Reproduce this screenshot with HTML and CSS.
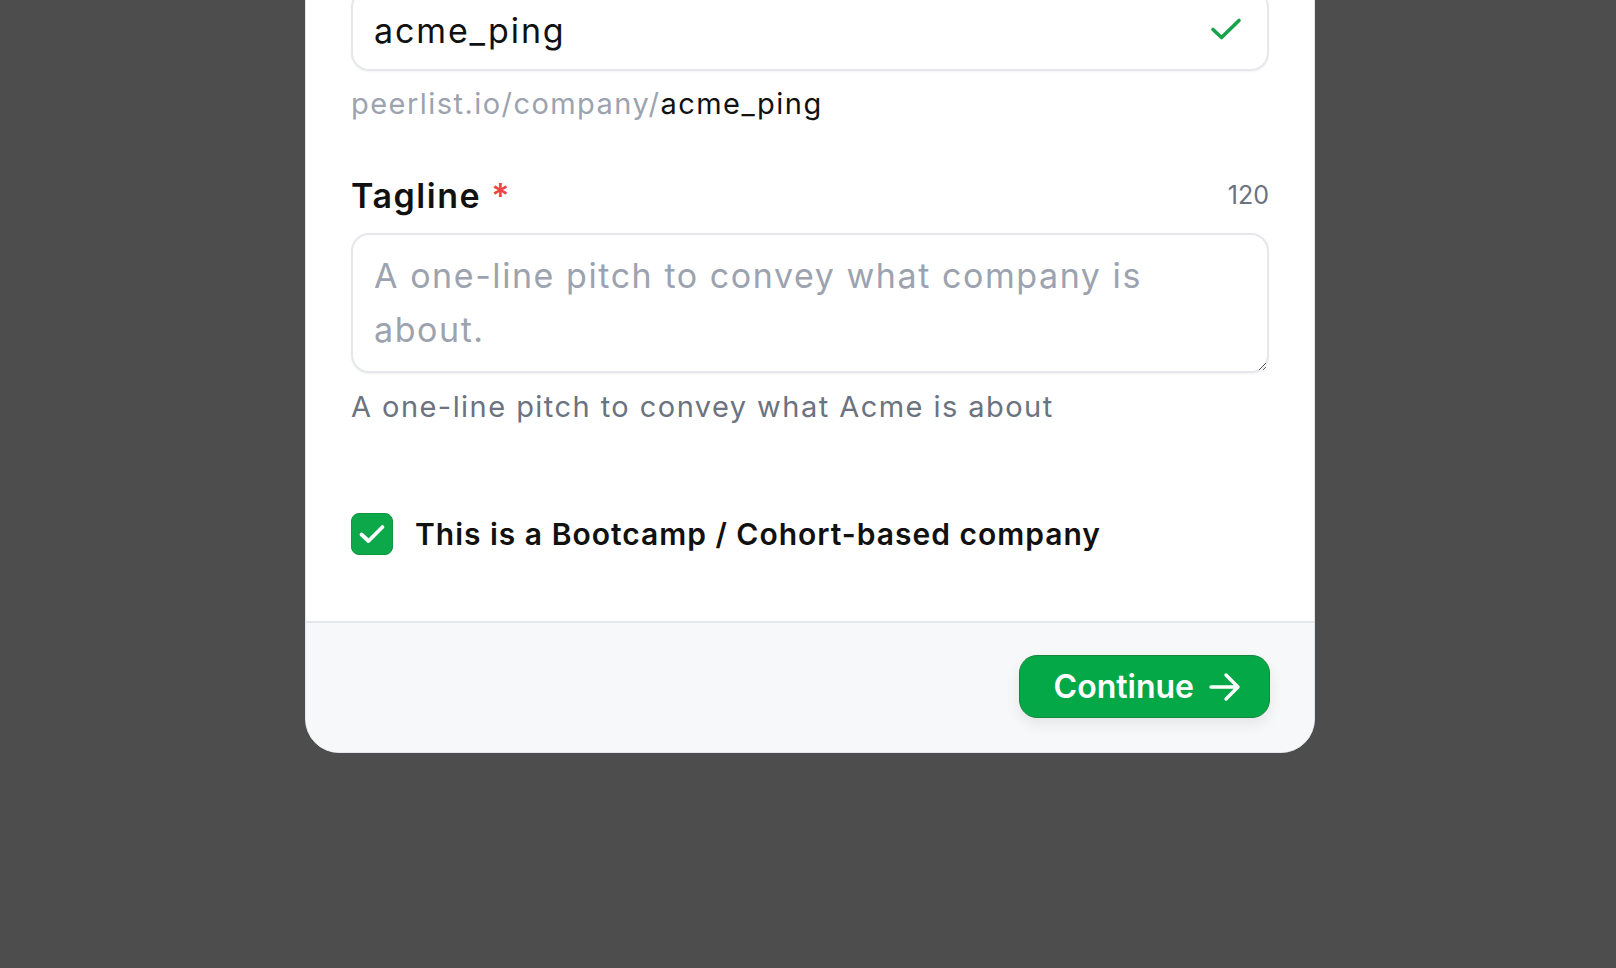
FILE: index.html
```html
<!DOCTYPE html>
<html lang="en">
<head>
<meta charset="utf-8">
<title>Create company</title>
<link rel="stylesheet" href="styles.css">
</head>
<body>
<div class="page">
  <div class="card">
    <div class="card-body">
      <div class="field">
        <div class="input-box">
          <span class="input-value">acme_ping</span>
          <svg class="valid-icon" width="32" height="24" viewBox="0 0 32 24" fill="none"><path d="M3 12.5l8.5 8L29 3.5" stroke="#16a34a" stroke-width="3.6" stroke-linecap="round" stroke-linejoin="round"/></svg>
        </div>
        <p class="url-hint"><span class="url-base">peerlist.io/company/</span><span class="url-slug">acme_ping</span></p>
      </div>

      <div class="field field-tagline">
        <div class="label-row">
          <label class="label" for="tagline">Tagline <span class="req">*</span></label>
          <span class="counter">120</span>
        </div>
        <textarea id="tagline" class="textarea" placeholder="A one-line pitch to convey what company is about."></textarea>
        <p class="hint">A one-line pitch to convey what Acme is about</p>
      </div>

      <div class="check-row">
        <span class="checkbox">
          <svg width="28" height="22" viewBox="0 0 28 22" fill="none"><path d="M3.5 11.5l7 6.5L24.5 4" stroke="#fff" stroke-width="3.8" stroke-linecap="round" stroke-linejoin="round"/></svg>
        </span>
        <span class="check-label">This is a Bootcamp / Cohort-based company</span>
      </div>
    </div>
    <div class="card-footer">
      <button class="btn-continue">Continue
        <svg width="34" height="30" viewBox="0 0 34 30" fill="none"><path d="M3 15h27M18 3l12 12-12 12" stroke="#fff" stroke-width="3.4" stroke-linecap="round" stroke-linejoin="round"/></svg>
      </button>
    </div>
  </div>
</div>
</body>
</html>
```

FILE: styles.css
```css
* { box-sizing: border-box; }
html, body {
  margin: 0;
  padding: 0;
  background: #4d4d4d;
  height: 100%;
  overflow: hidden;
}
body {
  font-family: Inter, "Noto Sans", sans-serif;
  color: #111;
}
.page {
  display: flex;
  justify-content: center;
}
.card {
  width: 1010px;
  margin-top: -60px;
  margin-left: 4px;
  background: #fff;
  border: 1px solid #e3e5ea;
  border-radius: 34px;
  overflow: hidden;
}
.card-body {
  padding: 48px 45px 66px 45px;
}
.input-box {
  height: 82px;
  border: 2px solid #e5e7eb;
  border-radius: 18px;
  display: flex;
  align-items: center;
  justify-content: space-between;
  padding: 0 25px 0 21px;
  box-shadow: 0 1px 2px rgba(0,0,0,0.05);
}
.input-value {
  font-size: 34px;
  letter-spacing: 0.055em;
  color: #111;
}
.valid-icon { margin-top: -2px; }
.url-hint {
  margin: 13px 0 0;
  font-size: 29px;
  line-height: 40px;
  letter-spacing: 0.05em;
}
.url-base { color: #9ca3af; }
.url-slug { color: #111; }
.field-tagline { margin-top: 49px; }
.label-row {
  display: flex;
  justify-content: space-between;
  align-items: center;
  height: 44px;
}
.label {
  font-size: 34px;
  font-weight: 600;
  letter-spacing: 0.045em;
  color: #111;
}
.req { color: #ef4444; letter-spacing: 0; }
.counter {
  font-size: 25px;
  color: #6b7280;
}
.textarea {
  display: block;
  width: 100%;
  height: 140px;
  margin-top: 16px;
  border: 2px solid #e5e7eb;
  border-radius: 18px;
  padding: 14px 40px 14px 21px;
  font-family: inherit;
  font-size: 34px;
  line-height: 54px;
  letter-spacing: 0.046em;
  color: #111;
  resize: vertical;
  outline: none;
  box-shadow: 0 1px 2px rgba(0,0,0,0.05);
}
.textarea::placeholder { color: #9ca3af; }
.hint {
  margin: 14px 0 0;
  font-size: 29px;
  line-height: 40px;
  letter-spacing: 0.05em;
  color: #6b7280;
}
.check-row {
  margin-top: 86px;
  display: flex;
  align-items: center;
  gap: 22px;
}
.checkbox {
  width: 42px;
  height: 42px;
  border-radius: 8px;
  background: #0ca84a;
  border: 1px solid #10963f;
  display: flex;
  align-items: center;
  justify-content: center;
}
.check-label {
  font-size: 30px;
  font-weight: 600;
  letter-spacing: 0.033em;
  color: #111;
}
.card-footer {
  background: #f7f8fa;
  border-top: 2px solid #e5e7eb;
  padding: 32px 44px 34px;
  display: flex;
  justify-content: flex-end;
}
.btn-continue {
  height: 63px;
  padding: 0 27px 0 34px;
  border-radius: 18px;
  background: #05a846;
  border: 1px solid #17873c;
  color: #fff;
  font-family: inherit;
  font-size: 32px;
  font-weight: 600;
  display: flex;
  align-items: center;
  gap: 14px;
  box-shadow: 0 6px 14px rgba(0,0,0,0.08);
}
```
